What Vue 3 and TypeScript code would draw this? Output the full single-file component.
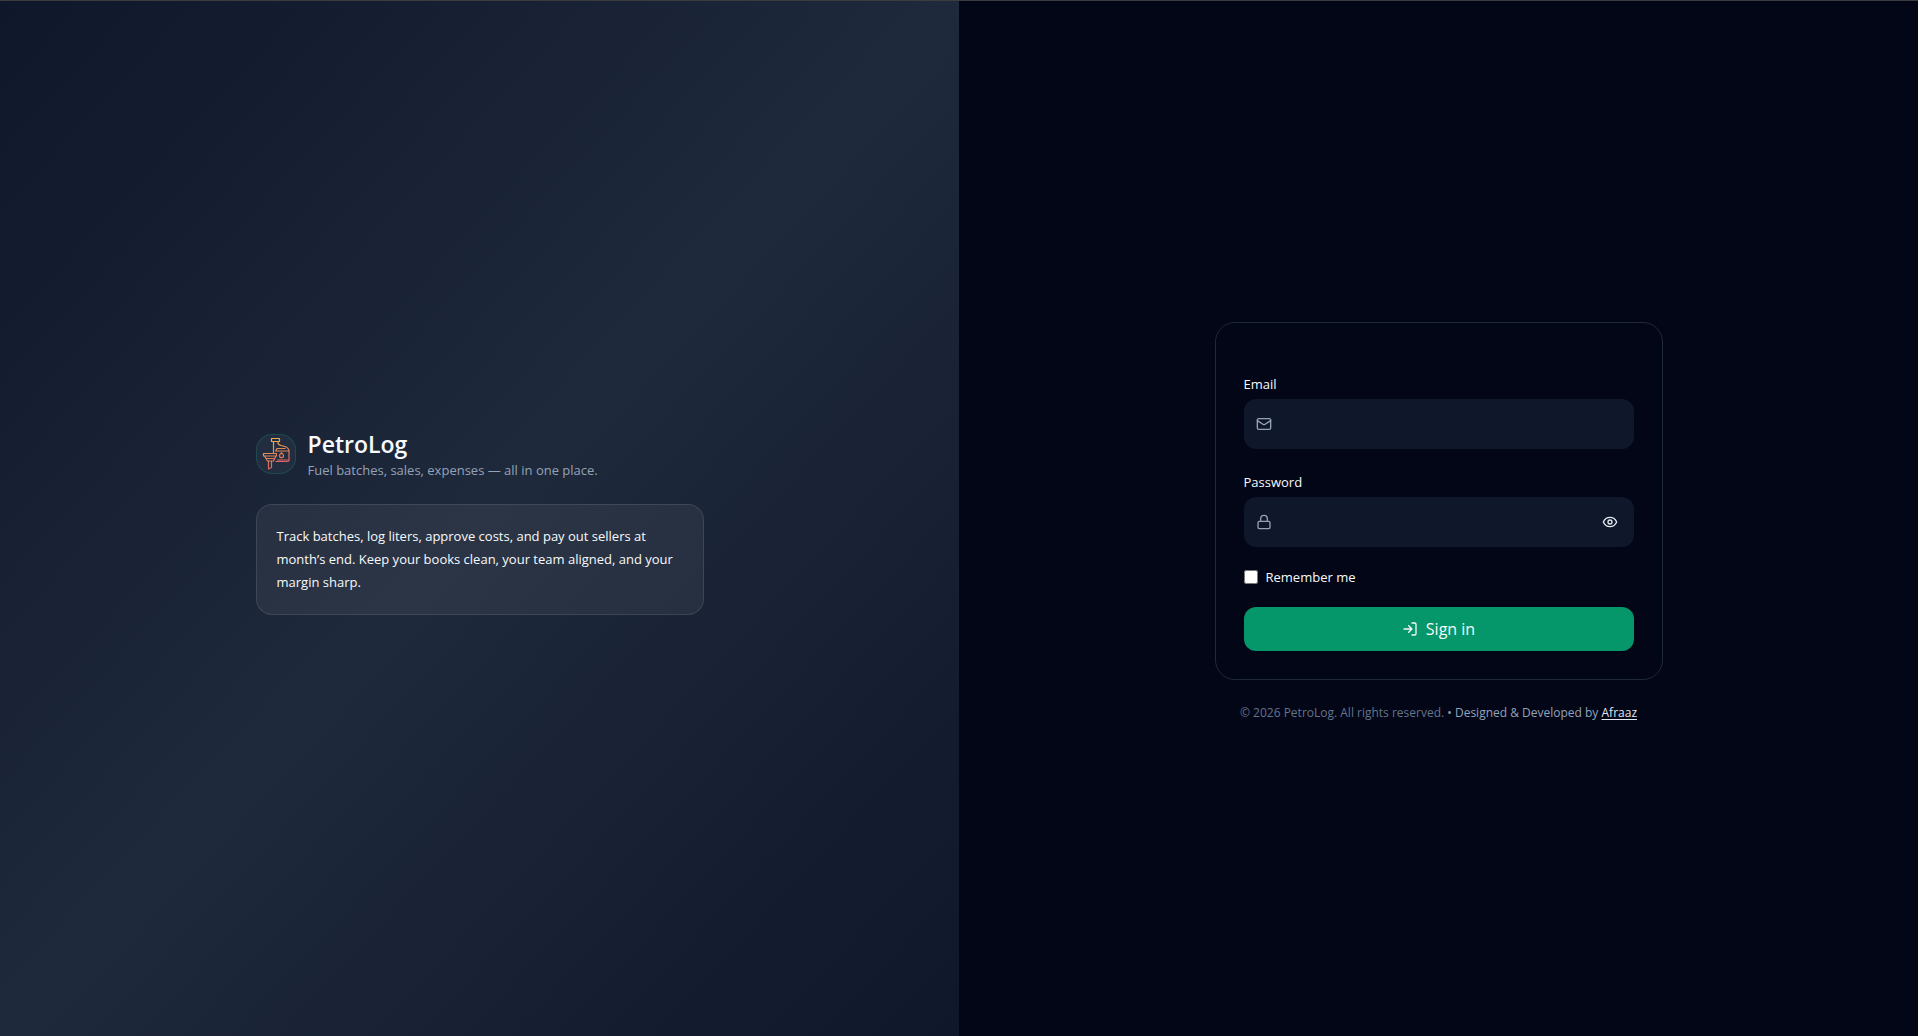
<script setup lang="ts">
import { ref } from 'vue'

const email = ref('')
const password = ref('')
const remember = ref(false)
const showPassword = ref(false)
</script>

<template>
  <div class="page">
    <section class="panel intro">
      <div class="column">
        <header class="brand">
          <svg class="logo" viewBox="0 0 40 40" fill="none" aria-hidden="true">
            <defs>
              <linearGradient id="fuel" x1="16" y1="4" x2="30" y2="32" gradientUnits="userSpaceOnUse">
                <stop offset="0" stop-color="#eeb04c" />
                <stop offset="0.5" stop-color="#e0845a" />
                <stop offset="1" stop-color="#d8566a" />
              </linearGradient>
            </defs>
            <g stroke="url(#fuel)" stroke-width="1.2" stroke-linejoin="round" stroke-linecap="round">
              <path d="M15.500 4.500h8v3h-8z" />
              <path d="M17.500 7.500v11M22 7.500v1.500c0 1.500 1 2 3 2.500l4 1c3 1 4 3 4 5v8.500c0 1-.5 1.500-1.500 1.500H20" />
              <path d="M21 14.500h8M19.500 17H33M20 16.500l1-2" />
              <path d="M21.500 26H33" />
              <path d="M25.500 18.800c1.300 1 2 1.800 2 2.900a2 2 0 0 1-4 0c0-1.100.7-1.900 2-2.900z" />
              <path d="M7.500 19.500h13v2.500h-13zM8.500 22l3 5h6l2.500-5M10.500 24.500h8" />
              <path d="M12.500 27v8l3-1.500V27" />
            </g>
          </svg>
          <div>
            <h1>PetroLog</h1>
            <p class="tagline">Fuel batches, sales, expenses — all in one place.</p>
          </div>
        </header>
        <p class="pitch">
          Track batches, log liters, approve costs, and pay out sellers at month’s end. Keep your
          books clean, your team aligned, and your margin sharp.
        </p>
      </div>
    </section>

    <main class="panel access">
      <div class="column">
        <form class="card" @submit.prevent>
          <div class="field">
            <label for="email">Email</label>
            <div class="control">
              <svg class="icon" viewBox="0 0 24 24" aria-hidden="true">
                <rect x="2" y="4" width="20" height="16" rx="2" />
                <path d="m22 7-8.970 5.700a1.940 1.940 0 0 1-2.060 0L2 7" />
              </svg>
              <input id="email" v-model="email" type="email" autocomplete="email" />
            </div>
          </div>
          <div class="field">
            <label for="password">Password</label>
            <div class="control">
              <svg class="icon" viewBox="0 0 24 24" aria-hidden="true">
                <rect x="3" y="11" width="18" height="11" rx="2" />
                <path d="M7 11V7a5 5 0 0 1 10 0v4" />
              </svg>
              <input
                id="password"
                v-model="password"
                :type="showPassword ? 'text' : 'password'"
                autocomplete="current-password"
              />
              <button
                class="reveal"
                type="button"
                aria-label="Show password"
                @click="showPassword = !showPassword"
              >
                <svg class="icon" viewBox="0 0 24 24" aria-hidden="true">
                  <path d="M2 12s3-7 10-7 10 7 10 7-3 7-10 7-10-7-10-7Z" />
                  <circle cx="12" cy="12" r="3" />
                </svg>
              </button>
            </div>
          </div>
          <label class="remember">
            <input v-model="remember" type="checkbox" />
            Remember me
          </label>
          <button class="submit" type="submit">
            <svg class="icon" viewBox="0 0 24 24" aria-hidden="true">
              <path d="M15 3h4a2 2 0 0 1 2 2v14a2 2 0 0 1-2 2h-4M10 17l5-5-5-5M15 12H3" />
            </svg>
            Sign in
          </button>
        </form>
        <footer>
          © 2026 PetroLog. All rights reserved.
          <span class="credit">• Designed &amp; Developed by <a href="#">Afraaz</a></span>
        </footer>
      </div>
    </main>
  </div>
</template>

<style>
body {
  margin: 0;
  background: #020617;
}
</style>

<style scoped>
.page {
  box-sizing: border-box;
  min-height: 100vh;
  display: grid;
  grid-template-columns: 1fr 1fr;
  border-top: 1px solid #3c3c3f;
  background: #020617;
  color: #f8fafc;
  font-family: 'Segoe UI', 'Open Sans', 'Noto Sans', sans-serif;
  font-size: 13px;
  line-height: 20px;
}

.panel {
  display: flex;
  align-items: center;
  justify-content: center;
  padding: 6px 24px 0;
}

.intro {
  background: linear-gradient(to bottom right, #0f172a, #1e293b 50%, #0f172a);
}

.column {
  width: 100%;
  max-width: 448px;
}

.brand {
  display: flex;
  align-items: center;
  gap: 12px;
  margin-bottom: 24px;
}

.logo {
  box-sizing: border-box;
  width: 40px;
  height: 40px;
  border-radius: 16px;
  background: #222e3f;
  box-shadow: inset 0 0 0 1px #1f4a50;
}

h1 {
  margin: 0;
  font-size: 23px;
  line-height: 32px;
  font-weight: 600;
}

p {
  margin: 0;
}

.tagline {
  color: #94a3b8;
}

.pitch {
  padding: 20px;
  border: 1px solid rgba(255, 255, 255, 0.1);
  border-radius: 16px;
  background: rgba(255, 255, 255, 0.06);
  line-height: 23px;
}

.card {
  display: flex;
  flex-direction: column;
  gap: 20px;
  padding: 48px 28px 28px;
  border: 1px solid #1e293b;
  border-radius: 20px;
}

.field {
  display: flex;
  flex-direction: column;
  gap: 2px;
  line-height: 26px;
}

.control {
  display: flex;
  align-items: center;
  gap: 8px;
  height: 50px;
  padding: 0 12px;
  border-radius: 12px;
  background: #0f172a;
}

.control input {
  flex: 1;
  min-width: 0;
  padding: 0;
  border: 0;
  outline: 0;
  background: transparent;
  color: inherit;
  font: inherit;
}

.icon {
  display: block;
  flex: none;
  width: 16px;
  height: 16px;
  fill: none;
  stroke: currentColor;
  stroke-width: 2;
  stroke-linecap: round;
  stroke-linejoin: round;
}

.control > .icon {
  color: #94a3b8;
}

.reveal {
  padding: 4px;
  border: 0;
  background: none;
  color: #e2e8f0;
}

.remember {
  display: flex;
  align-items: center;
  gap: 8px;
}

.remember input {
  width: 14px;
  height: 14px;
  margin: 0;
}

.submit {
  display: flex;
  align-items: center;
  justify-content: center;
  gap: 8px;
  height: 44px;
  padding: 0;
  border: 0;
  border-radius: 12px;
  background: #059669;
  color: #f8fafc;
  font-family: inherit;
  font-size: 16px;
  line-height: 24px;
}

footer {
  margin-top: 24px;
  color: #64748b;
  font-size: 12px;
  line-height: 18px;
  text-align: center;
}

.credit {
  color: #94a3b8;
}

.credit a {
  color: #e2e8f0;
  text-underline-offset: 2px;
}
</style>
